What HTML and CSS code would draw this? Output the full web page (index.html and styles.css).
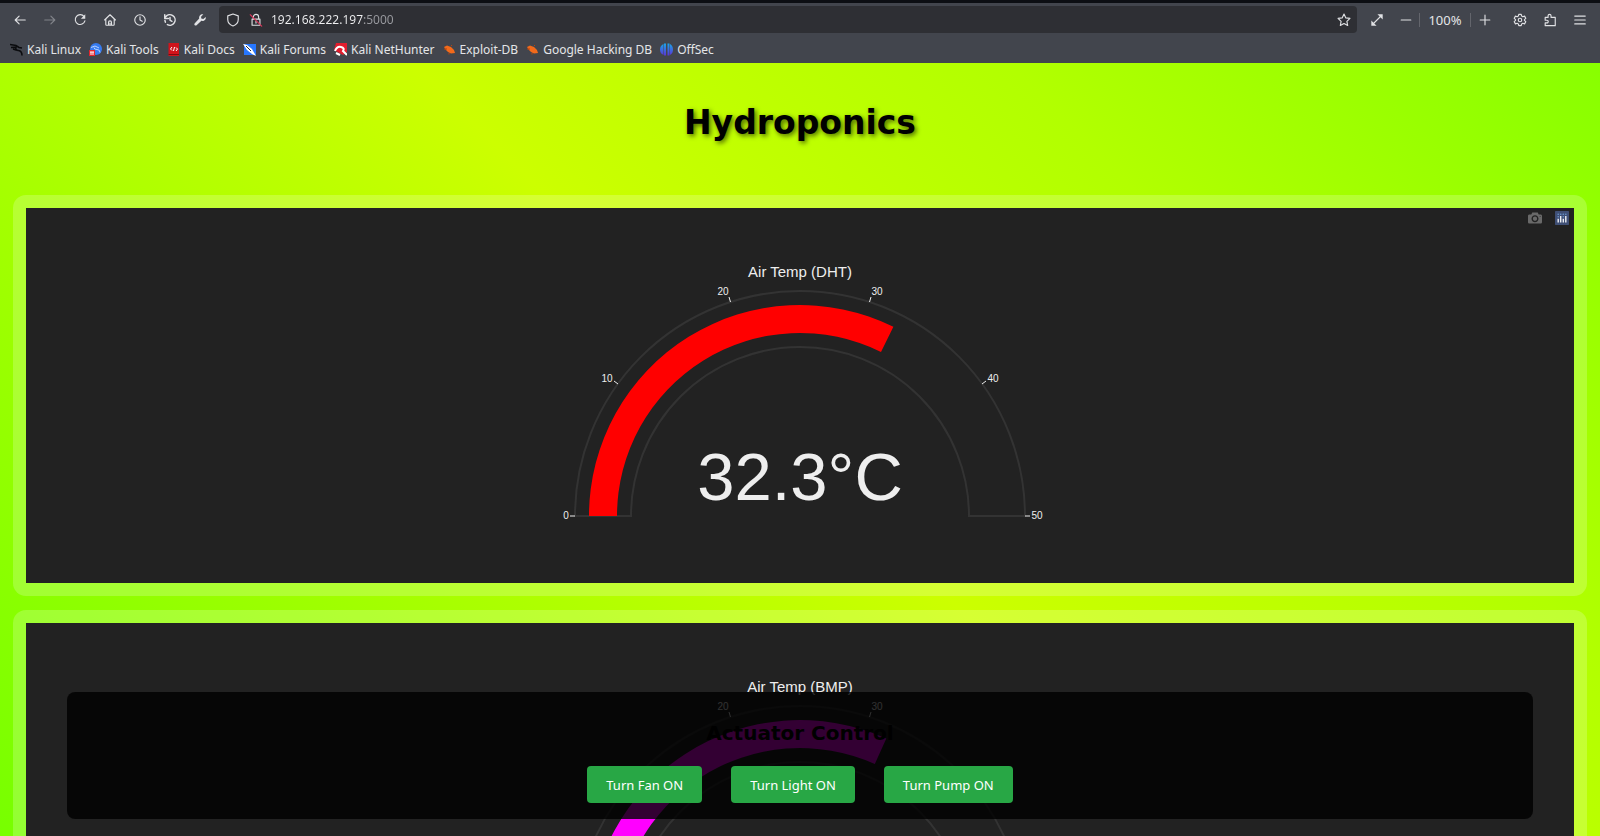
FILE: index.html
```html
<!DOCTYPE html>
<html lang="en">
<head>
<meta charset="utf-8">
<title>Hydroponics</title>
<link rel="stylesheet" href="styles.css">
</head>
<body>
<header class="browser">
  <div class="toolbar">
    <nav class="nav-buttons" aria-label="Navigation">
      <button class="tool" aria-label="Back"><svg class="icon" viewBox="0 0 16 16"><path d="M14 8H2.500M7 3.500 2.500 8 7 12.500"/></svg></button>
      <button class="tool" aria-label="Forward" disabled><svg class="icon" viewBox="0 0 16 16"><path d="M2 8h11.500M9 3.500 13.500 8 9 12.500"/></svg></button>
      <button class="tool" aria-label="Reload"><svg class="icon" viewBox="0 0 16 16"><path d="M12.700 4.200A5.600 5.600 0 1 0 13.600 9"/><path class="solid" d="M14 1.500v5H9z"/></svg></button>
      <button class="tool" aria-label="Home"><svg class="icon" viewBox="0 0 16 16"><path d="M1.800 8 8 2l6.200 6M3.200 7v6.200q0 .8.800.8h8q.8 0 .8-.8V7M6.300 14v-3.500q0-1.500 1.700-1.500t1.700 1.500V14M8 11.500V14"/></svg></button>
      <button class="tool" aria-label="Recent"><svg class="icon" viewBox="0 0 16 16"><circle cx="8" cy="8" r="6"/><path d="M8 4.500V8l2.500 1.500"/></svg></button>
      <button class="tool" aria-label="History"><svg class="icon bold" viewBox="0 0 16 16"><path d="M3 4.500A6 6 0 1 1 5 13.300M2 2v4.200h4.200M2.200 8.500l.5 2M8 5v3.200l2.200 1.300"/></svg></button>
      <button class="tool" aria-label="Developer tools"><svg class="icon" viewBox="0 0 16 16"><path class="solid" d="M14.500 4.500 11.800 6.800 9.500 6.300 9.200 4.200 11.800 1.500C9 .8 6.400 3.200 7.100 6.300L1.800 11.900c-1 1.400.8 3.300 2.300 2.200L9.600 8.900c3 .8 5.700-1.600 4.900-4.400z"/></svg></button>
    </nav>
    <div class="address">
      <svg class="icon" viewBox="0 0 16 16"><path d="M8 1.200 14 3.300v4c0 3.400-2.600 6.200-6 7.500-3.400-1.300-6-4.100-6-7.500v-4z"/></svg>
      <svg class="icon lock" viewBox="0 0 16 16"><path d="M5 7V4.500a3 3 0 0 1 6 0V7M3.500 7h9v7h-9zM8 9.500v2"/><path class="strike" d="M1.500 2 14.500 15"/></svg>
      <input class="url" type="text" aria-label="Address" value="192.168.222.197:5000">
      <button class="tool star" aria-label="Bookmark this page"><svg class="icon" viewBox="0 0 16 16"><path d="m8 1.200 2.100 4.400 4.700.6-3.500 3.300.9 4.800L8 12l-4.200 2.300.9-4.800L1.200 6.200l4.700-.6z"/></svg></button>
    </div>
    <div class="page-tools">
      <button class="tool" aria-label="Full screen"><svg class="icon" viewBox="0 0 16 16"><path d="M4 12 12 4"/><path class="solid" d="M8.500 1.500h6v6zM7.500 14.500h-6v-6z"/></svg></button>
      <div class="zoom">
        <button class="tool" aria-label="Zoom out"><svg class="icon" viewBox="0 0 16 16"><path d="M2.500 8h11"/></svg></button>
        <button class="level">100%</button>
        <button class="tool" aria-label="Zoom in"><svg class="icon" viewBox="0 0 16 16"><path d="M2.500 8h11M8 2.500v11"/></svg></button>
      </div>
      <div class="menus">
        <button class="tool" aria-label="Settings"><svg class="icon" viewBox="0 0 16 16"><path d="M6.600 1.500h2.800l.5 2 1.300.7 2-.6 1.400 2.500L13.100 7.500v1l1.500 1.400-1.400 2.500-2-.6-1.300.7-.5 2H6.600l-.5-2-1.300-.7-2 .6-1.400-2.500L2.900 8.500v-1L1.400 6.100l1.400-2.500 2 .6 1.300-.7z"/><circle cx="8" cy="8" r="2"/></svg></button>
        <button class="tool" aria-label="Extensions"><svg class="icon" viewBox="0 0 16 16"><path d="M2.500 5h3.300V3.200a1.700 1.700 0 0 1 3.400 0V5h4.800v9.500H2.500v-3.200h2a1.500 1.500 0 0 0 0-3h-2z"/></svg></button>
        <button class="tool" aria-label="Menu"><svg class="icon" viewBox="0 0 16 16"><path d="M2 3.500h12M2 8h12M2 12.500h12"/></svg></button>
      </div>
    </div>
  </div>
  <nav class="bookmarks" aria-label="Bookmarks">
    <a class="bookmark" href="#linux"><svg class="fav" viewBox="0 0 13 13"><path fill="none" stroke="#0b0c0f" stroke-width="1.600" d="M0 1.500 6 2.500 9 4.500 12 5M1 4.500 6 4.200Q5 7 8.500 7.500T12 12.500M3 6l3 1"/></svg>Kali Linux</a>
    <a class="bookmark" href="#tools"><svg class="fav" viewBox="0 0 13 13"><circle cx="7" cy="6" r="6" fill="#367bf0"/><path fill="none" stroke="#b9d3ff" d="M2 4.500 6 3l4 2M5 4.500q0 2 3 2t3 3"/><path fill="#e3262e" d="M0 7h6v6H0z"/><path stroke="#fff" d="M2 9V12M4 9V12M1 9h4"/></svg>Kali Tools</a>
    <a class="bookmark" href="#docs"><svg class="fav" viewBox="0 0 13 13"><path fill="#d0141c" d="M1.500 0H12v13H1.500z"/><path fill="#7f0b10" d="M1.500 11H12v1H1.500z"/><path fill="none" stroke="#fff" d="M5 4 3.500 6 5 7.500M6.500 8 7.500 4M9 4.500 10.500 6 9 8"/></svg>Kali Docs</a>
    <a class="bookmark" href="#forums"><svg class="fav" viewBox="0 0 13 13"><path fill="#2777ff" d="M1 1h12v11H1z"/><path fill="#fff" d="m0 1 4 1 5 4 4 7-4-2-5-4z"/><path stroke="#26282e" d="m3 3 5 5"/></svg>Kali Forums</a>
    <a class="bookmark" href="#nethunter"><svg class="fav" viewBox="0 0 13 13"><path fill="#e11d2e" d="M2 0h11v9L9 12 0 7z"/><path fill="none" stroke="#fff" stroke-width="2" d="M1 8q2-5 6-4t2 4l4 4M2 10l4 2"/></svg>Kali NetHunter</a>
    <a class="bookmark" href="#exploit"><svg class="fav" viewBox="0 0 13 13"><path fill="#f26a1b" d="M1 4 4 2.500l4 1.500 3 3 1 3-4 .5L5 9 3 7z"/><path stroke="#b9430c" d="M1 6h3M6 10v1.500M8 3l1-1"/></svg>Exploit-DB</a>
    <a class="bookmark" href="#ghdb"><svg class="fav" viewBox="0 0 13 13"><path fill="#f26a1b" d="M1 4 4 2.500l4 1.500 3 3 1 3-4 .5L5 9 3 7z"/><path stroke="#b9430c" d="M1 6h3M6 10v1.500M8 3l1-1"/></svg>Google Hacking DB</a>
    <a class="bookmark" href="#offsec"><svg class="fav" viewBox="0 0 13 13"><defs><linearGradient id="off" x2="0" y2="1"><stop stop-color="#1aa6e8"/><stop offset="1" stop-color="#5a35d6"/></linearGradient></defs><path fill="url(#off)" d="M3.500 1v11Q0 10.500 0 6.500T3.500 1zM4 .5H6v12H4zM7.500.5h2v12h-2zM10 1q3 1.500 3 5.500T10 12z"/></svg>OffSec</a>
  </nav>
</header>

<main class="page">
  <h1 class="title">Hydroponics</h1>
  <section class="card">
    <div class="plot">
      <div class="modebar">
        <button class="mode" aria-label="Download plot as a png"><svg class="mode-icon" viewBox="0 0 1000 1000"><path fill="#696969" transform="matrix(1 0 0 -1 0 850)" d="m500 450c-83 0-150-67-150-150 0-83 67-150 150-150 83 0 150 67 150 150 0 83-67 150-150 150z m400 150h-120c-16 0-34 13-39 29l-31 93c-6 15-23 28-40 28h-340c-16 0-34-13-39-28l-31-94c-6-15-23-28-40-28h-120c-55 0-100-45-100-100v-450c0-55 45-100 100-100h800c55 0 100 45 100 100v450c0 55-45 100-100 100z m-400-550c-138 0-250 112-250 250 0 138 112 250 250 250 138 0 250-112 250-250 0-138-112-250-250-250z m365 380c-19 0-35 16-35 35 0 19 16 35 35 35 19 0 35-16 35-35 0-19-16-35-35-35z"/></svg></button>
        <a class="mode" href="#plotly" aria-label="Produced with Plotly"><svg class="mode-icon" viewBox="0 0 132 132"><rect width="132" height="132" rx="6" fill="#3f4f75"/><g fill="#6f9bd0"><circle cx="30" cy="30" r="7"/><circle cx="54" cy="30" r="7"/><circle cx="78" cy="30" r="7"/><circle cx="102" cy="30" r="7"/><circle cx="30" cy="54" r="7"/><circle cx="78" cy="54" r="7"/></g><path fill="#fff" d="M24 72h12v36H24zM48 48h12v60H48zM72 72h12v36H72zM96 48h12v60H96z"/></svg></a>
      </div>
      <svg class="gauge" viewBox="0 0 520 375" role="img" aria-label="Air Temp (DHT) gauge">
        <path class="outline" d="M35 308A225 225 0 0 1 485 308H429A169 169 0 0 0 91 308z"/>
        <path fill="#ff0000" d="M49 308A211 211 0 0 1 353.400 118.800L341 143.900A183 183 0 0 0 77 308z"/>
        <path class="ticks" d="M30 308h5M74 173l4 3M189 89l1.500 5M331 89l-1.500 5M446 173l-4 3M485 308h5"/>
        <g class="tick-text"><text x="26" y="311">0</text><text x="67" y="174">10</text><text x="183" y="87">20</text><text x="337" y="87">30</text><text x="453" y="174">40</text><text x="497" y="311">50</text></g>
        <text class="name" x="260" y="69">Air Temp (DHT)</text>
        <text class="value" x="260" y="292">32.3°C</text>
      </svg>
    </div>
  </section>
  <section class="card">
    <div class="plot">
      <svg class="gauge" viewBox="0 0 520 375" role="img" aria-label="Air Temp (BMP) gauge">
        <path class="outline" d="M35 308A225 225 0 0 1 485 308H429A169 169 0 0 0 91 308z"/>
        <path fill="#ff00ff" d="M49 308A211 211 0 0 1 346.300 115.500L334.800 141A183 183 0 0 0 77 308z"/>
        <path class="ticks" d="M30 308h5M74 173l4 3M189 89l1.500 5M331 89l-1.500 5M446 173l-4 3M485 308h5"/>
        <g class="tick-text"><text x="183" y="87">20</text><text x="337" y="87">30</text></g>
        <text class="name" x="260" y="69">Air Temp (BMP)</text>
      </svg>
    </div>
  </section>
  <section class="actuators">
    <h2 class="subtitle">Actuator Control</h2>
    <div class="actions">
      <button class="action">Turn Fan ON</button>
      <button class="action">Turn Light ON</button>
      <button class="action">Turn Pump ON</button>
    </div>
  </section>
</main>
</body>
</html>
```
FILE: styles.css
```css
* { box-sizing: border-box; }
body {
  margin: 0;
  height: 100vh;
  display: flex;
  flex-direction: column;
  overflow: hidden;
  font-family: "Noto Sans", sans-serif;
  font-size: 12px;
}
button { font: inherit; border: 0; padding: 0; background: none; color: inherit; }

.browser {
  flex: none;
  background: #42454d;
  border-top: 3px solid #0c0e13;
  color: #e4e5e8;
}
.toolbar { display: flex; align-items: center; height: 33px; padding: 0 5px; }
.nav-buttons { display: flex; margin-right: 4px; }
.tool { display: flex; align-items: center; justify-content: center; width: 30px; height: 26px; }
.tool:disabled { opacity: 0.4; }
.icon {
  flex: none;
  width: 14px;
  height: 14px;
  fill: none;
  stroke: #e0e1e4;
  stroke-width: 1.3;
  stroke-linecap: round;
  stroke-linejoin: round;
}
.icon.bold { stroke-width: 1.7; }
.icon .solid { fill: #e0e1e4; stroke: none; }
.icon .strike { stroke: #d8365a; }
.address {
  flex: 1;
  display: flex;
  align-items: center;
  height: 27px;
  padding-left: 7px;
  background: #2e2f34;
  border-radius: 4px;
}
.lock { margin: 0 8px 0 9px; }
.url {
  flex: 1;
  min-width: 0;
  border: 0;
  padding: 0;
  outline: 0;
  font: inherit;
  color: transparent;
  background: linear-gradient(90deg, #f0f0f2 92px, #9a9ba0 92px);
  background-clip: text;
  -webkit-background-clip: text;
}
.star { width: 27px; }
.page-tools { display: flex; align-items: center; margin-left: 5px; }
.zoom { display: flex; align-items: center; margin-right: 4px; }
.zoom .tool { width: 27px; }
.level { width: 52px; height: 14px; border: solid #63656c; border-width: 0 1px; line-height: 14px; font-size: 13px; }
.menus { display: flex; margin-left: 3px; }

.bookmarks { display: flex; align-items: center; gap: 8px; height: 27px; padding: 0 10px; }
.bookmark { display: flex; align-items: center; gap: 4px; color: #e4e5e8; text-decoration: none; white-space: nowrap; }
.fav { width: 13px; height: 13px; }

.page {
  flex: 1;
  min-height: 0;
  position: relative;
  overflow: hidden;
  padding: 0 13px;
  background: linear-gradient(45deg, #77ff00, #ccff00 50%, #b2ff00 75%, #88ff00);
}
.title {
  margin: 0;
  padding: 40px 0 52px;
  font: bold 33px/40px "DejaVu Sans", sans-serif;
  text-align: center;
  color: #000;
  text-shadow: 2px 2px 5px rgba(0, 0, 0, 0.6);
}
.card {
  margin-bottom: 14px;
  padding: 13px;
  background: rgba(255, 255, 255, 0.2);
  border-radius: 13px;
}
.plot { position: relative; background: #222; }
.gauge { display: block; height: 375px; margin: 0 auto; font-family: "Liberation Sans", sans-serif; }
.outline { fill: none; stroke: #333; stroke-width: 2; }
.ticks { fill: none; stroke: #eee; }
.gauge text { fill: #eee; text-anchor: middle; }
.gauge .tick-text text { font-size: 10px; }
.gauge .name { font-size: 15px; }
.gauge .value { font-size: 67px; }
.modebar { position: absolute; top: 3px; right: 5px; display: flex; gap: 13px; }
.mode { display: block; }
.mode-icon { display: block; width: 14px; height: 14px; }

.actuators {
  position: absolute;
  left: 67px;
  right: 67px;
  bottom: 17px;
  padding: 28px 20px 16px;
  background: rgba(0, 0, 0, 0.8);
  border-radius: 8px;
  text-align: center;
}
.subtitle { margin: 0 0 20px; font: bold 20px/26px "DejaVu Sans", sans-serif; color: #000; }
.actions { display: flex; justify-content: center; gap: 29px; }
.action {
  height: 37px;
  padding: 0 19px;
  border-radius: 4px;
  background: #28a745;
  color: #fff;
  font-size: 13px;
}
```
